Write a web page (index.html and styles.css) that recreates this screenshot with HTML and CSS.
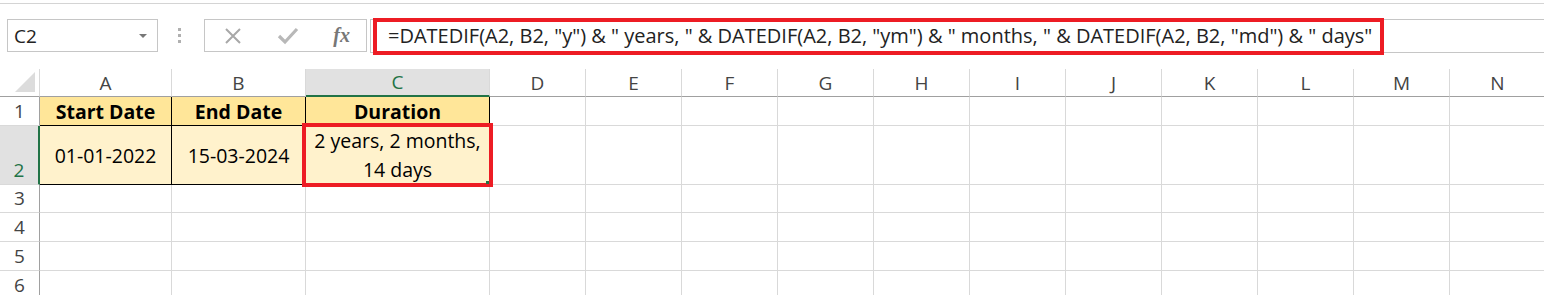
FILE: index.html
```html
<!DOCTYPE html>
<html lang="en">
  <head>
    <meta charset="UTF-8" />
    <title>DATEDIF duration</title>
    <link rel="stylesheet" href="styles.css">
  </head>
  <body>
    <div class="top-rule"></div>

    <div class="formula-row">
      <div class="name-box">
        <span class="name">C2</span>
        <span class="caret"></span>
      </div>
      <div class="grip"><i></i><i></i><i></i></div>
      <div class="fx-buttons">
        <svg class="icon" width="20" height="20" viewBox="0 0 20 20"><path d="M3 3 L17 17 M17 3 L3 17" stroke="#a8a8a8" stroke-width="2" fill="none"/></svg>
        <svg class="icon" width="22" height="20" viewBox="0 0 22 20"><path d="M2 10 L8 16 L20 3" stroke="#b8b8b8" stroke-width="3.2" fill="none"/></svg>
        <span class="fx">fx</span>
      </div>
      <div class="formula-box">
        <span class="formula">=DATEDIF(A2, B2, "y") &amp; " years, " &amp; DATEDIF(A2, B2, "ym") &amp; " months, " &amp; DATEDIF(A2, B2, "md") &amp; " days"</span>
      </div>
    </div>

    <div class="sheet">
      <!-- column headers -->
      <div class="corner"><svg width="22" height="22" viewBox="0 0 22 22"><path d="M21 1 L21 21 L1 21 Z" fill="#dcdcdc"/></svg></div>
      <div class="col-head">A</div>
      <div class="col-head">B</div>
      <div class="col-head active">C</div>
      <div class="col-head">D</div>
      <div class="col-head">E</div>
      <div class="col-head">F</div>
      <div class="col-head">G</div>
      <div class="col-head">H</div>
      <div class="col-head">I</div>
      <div class="col-head">J</div>
      <div class="col-head">K</div>
      <div class="col-head">L</div>
      <div class="col-head">M</div>
      <div class="col-head">N</div>

      <!-- row 1 -->
      <div class="row-head">1</div>
      <div class="cell head-fill boxed bold">Start Date</div>
      <div class="cell head-fill boxed bold">End Date</div>
      <div class="cell head-fill boxed bold">Duration</div>
      <div class="cell"></div><div class="cell"></div><div class="cell"></div><div class="cell"></div><div class="cell"></div><div class="cell"></div><div class="cell"></div><div class="cell"></div><div class="cell"></div><div class="cell"></div><div class="cell"></div>

      <!-- row 2 -->
      <div class="row-head active">2</div>
      <div class="cell data-fill boxed">01-01-2022</div>
      <div class="cell data-fill boxed">15-03-2024</div>
      <div class="cell data-fill boxed selected">2 years, 2 months,<br>14 days</div>
      <div class="cell"></div><div class="cell"></div><div class="cell"></div><div class="cell"></div><div class="cell"></div><div class="cell"></div><div class="cell"></div><div class="cell"></div><div class="cell"></div><div class="cell"></div><div class="cell"></div>

      <!-- row 3 -->
      <div class="row-head">3</div>
      <div class="cell"></div><div class="cell"></div><div class="cell"></div><div class="cell"></div><div class="cell"></div><div class="cell"></div><div class="cell"></div><div class="cell"></div><div class="cell"></div><div class="cell"></div><div class="cell"></div><div class="cell"></div><div class="cell"></div><div class="cell"></div>

      <!-- row 4 -->
      <div class="row-head">4</div>
      <div class="cell"></div><div class="cell"></div><div class="cell"></div><div class="cell"></div><div class="cell"></div><div class="cell"></div><div class="cell"></div><div class="cell"></div><div class="cell"></div><div class="cell"></div><div class="cell"></div><div class="cell"></div><div class="cell"></div><div class="cell"></div>

      <!-- row 5 -->
      <div class="row-head">5</div>
      <div class="cell"></div><div class="cell"></div><div class="cell"></div><div class="cell"></div><div class="cell"></div><div class="cell"></div><div class="cell"></div><div class="cell"></div><div class="cell"></div><div class="cell"></div><div class="cell"></div><div class="cell"></div><div class="cell"></div><div class="cell"></div>

      <!-- row 6 -->
      <div class="row-head">6</div>
      <div class="cell"></div><div class="cell"></div><div class="cell"></div><div class="cell"></div><div class="cell"></div><div class="cell"></div><div class="cell"></div><div class="cell"></div><div class="cell"></div><div class="cell"></div><div class="cell"></div><div class="cell"></div><div class="cell"></div><div class="cell"></div>
    </div>
  </body>
</html>
```

FILE: styles.css
```css
:root {
  --grid: #d9d9d9;
  --head-line: #a0a0a0;
  --green: #217346;
  --red: #ed1c24;
}
* {
  box-sizing: border-box;
}
body {
  margin: 0;
  width: 1544px;
  overflow: hidden;
  font-family: "Open Sans", "Liberation Sans", sans-serif;
  background: #fff;
  color: #000;
}

/* strip above the formula bar */
.top-rule {
  height: 4px;
  border-bottom: 1px solid #d4d4d4;
}

/* formula bar */
.formula-row {
  display: flex;
  align-items: flex-start;
  height: 37px;
  margin-top: 14px;
}
.name-box {
  display: flex;
  align-items: center;
  justify-content: space-between;
  width: 151px;
  height: 33px;
  margin: 1px 0 0 7px;
  padding: 0 10px 0 6px;
  border: 1px solid #c6c6c6;
}
.name {
  font-size: 19px;
  color: #222;
}
.caret {
  width: 0;
  height: 0;
  border-left: 4px solid transparent;
  border-right: 4px solid transparent;
  border-top: 4px solid #777;
}
.grip {
  display: flex;
  flex-direction: column;
  gap: 3px;
  margin: 10px 0 0 20px;
}
.grip i {
  width: 3px;
  height: 3px;
  background: #b0b0b0;
}
.fx-buttons {
  display: flex;
  align-items: center;
  justify-content: space-between;
  width: 163px;
  height: 33px;
  margin: 1px 0 0 23px;
  padding: 0 16px 0 18px;
  border: 1px solid #c6c6c6;
}
.fx {
  font-family: "Liberation Serif", serif;
  font-style: italic;
  font-weight: bold;
  font-size: 20px;
  color: #777;
}
.formula-box {
  flex: 1;
  display: flex;
  align-items: flex-start;
  height: 34px;
  margin: 1px 0 0 3px;
  border: 1px solid #c6c6c6;
  border-right: none;
}
.formula {
  display: inline-block;
  height: 37px;
  margin: -2px 0 0 2px;
  padding: 0 8px 0 11px;
  border: 4px solid var(--red);
  font-size: 20px;
  line-height: 28px;
  color: #222;
  white-space: nowrap;
}

/* worksheet grid */
.sheet {
  display: grid;
  grid-template-columns: 40px 132px 134px 184px repeat(11, 96px);
  grid-template-rows: 28px 29px 59px 28px 29px 29px 29px;
  margin-top: 14px;
}
.corner {
  display: flex;
  align-items: flex-end;
  justify-content: flex-end;
  padding: 0 3px 3px 0;
  border-right: 1px solid var(--grid);
  border-bottom: 1px solid var(--head-line);
}
.col-head {
  display: flex;
  align-items: center;
  justify-content: center;
  font-size: 19px;
  color: #444;
  border-right: 1px solid var(--grid);
  border-bottom: 1px solid var(--head-line);
}
.col-head.active {
  background: #e1e1e1;
  color: var(--green);
  border-bottom: 2px solid var(--green);
}
.row-head {
  display: flex;
  align-items: flex-end;
  justify-content: center;
  padding-bottom: 0;
  font-size: 19px;
  line-height: 27px;
  color: #444;
  border-right: 1px solid var(--head-line);
  border-bottom: 1px solid var(--grid);
}
.row-head.active {
  background: #e1e1e1;
  color: var(--green);
  border-right: 2px solid var(--green);
}
.cell {
  display: flex;
  align-items: center;
  justify-content: center;
  text-align: center;
  font-size: 19.5px;
  line-height: 29px;
  border-right: 1px solid var(--grid);
  border-bottom: 1px solid var(--grid);
}
.cell.boxed {
  border-color: #000;
}
.head-fill {
  background: #ffe699;
}
.data-fill {
  background: #fff2cc;
}
.bold {
  font-weight: bold;
}

/* selected cell: red callout and the fill handle */
.selected {
  position: relative;
}
.selected::after {
  content: "";
  position: absolute;
  top: -3px;
  left: -4px;
  right: -4px;
  bottom: -3px;
  border: 4px solid var(--red);
}
.selected::before {
  content: "";
  position: absolute;
  right: 0;
  bottom: 0;
  width: 3px;
  height: 3px;
  background: var(--green);
  z-index: 1;
}
```
